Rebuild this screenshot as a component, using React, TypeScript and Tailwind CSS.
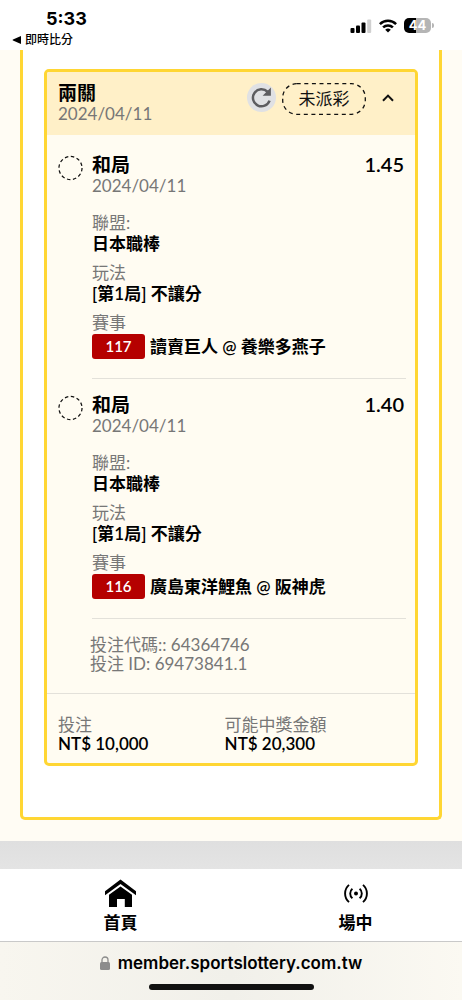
import { useState } from 'react';

type Leg = {
  pick: string;
  date: string;
  odds: string;
  league: string;
  market: string;
  code: string;
  match: string;
};

const LEGS: Leg[] = [
  { pick: '和局', date: '2024/04/11', odds: '1.45', league: '日本職棒', market: '[第1局] 不讓分', code: '117', match: '讀賣巨人 @ 養樂多燕子' },
  { pick: '和局', date: '2024/04/11', odds: '1.40', league: '日本職棒', market: '[第1局] 不讓分', code: '116', match: '廣島東洋鯉魚 @ 阪神虎' },
];

function StatusBar() {
  return (
    <header className="flex h-[50px] shrink-0 items-start justify-between bg-white pl-3 pr-7">
      <div className="flex flex-col pt-2 text-black">
        <span className="pl-[34px] font-['Inter','Noto_Sans_CJK_TC',sans-serif] text-[18px] font-bold leading-[22px]">5:33</span>
        <a href="#back" className="flex items-center gap-1 text-[12px] font-medium leading-5">
          <svg className="h-2 w-[9px]" viewBox="0 0 9 8" fill="currentColor" aria-hidden="true">
            <path d="M9 0v8L1 4.6a.7.7 0 0 1 0-1.2z" />
          </svg>
          即時比分
        </a>
      </div>
      <div className="flex items-center gap-[7px] pt-[18px]">
        <svg className="h-[14px] w-[22px]" viewBox="0 0 22 14" aria-hidden="true">
          <rect x="0.5" y="9" width="4" height="5" rx="1" />
          <rect x="6" y="6.5" width="4" height="7.5" rx="1" />
          <rect x="11.5" y="3.5" width="4" height="10.5" rx="1" />
          <rect x="17.2" y="0.5" width="4" height="13.5" rx="1" fill="#d0d0d0" />
        </svg>
        <svg className="h-[14px] w-[18px]" viewBox="0 0 18 14" fill="none" stroke="#000" strokeWidth="2.5" aria-hidden="true">
          <path d="M.9 5.1a11.6 11.6 0 0 1 16.2 0M4.1 8.4a7 7 0 0 1 9.8 0" />
          <path d="M9 13.6 6.2 10.8a4 4 0 0 1 5.6 0z" fill="#000" stroke="none" />
        </svg>
        <div className="flex items-center gap-px">
          <span className="flex h-[15px] w-[27px] items-center justify-center rounded-[5px] bg-linear-to-r from-black from-44% to-[#b5b5b5] to-44% font-['Inter',sans-serif] text-[13px] font-bold leading-none text-white">
            44
          </span>
          <span className="h-[5px] w-[2px] rounded-r-full bg-[#b5b5b5]" />
        </div>
      </div>
    </header>
  );
}

function Field({ label, value }: { label: string; value: string }) {
  return (
    <div className="leading-[21px]">
      <dt className="text-[#777]">{label}</dt>
      <dd className="font-semibold text-black">{value}</dd>
    </div>
  );
}

function LegRow({ leg }: { leg: Leg }) {
  return (
    <li className="flex gap-[9px] pl-[11px] pr-[9px]">
      <svg className="mt-4 h-[26px] w-[25px] shrink-0" viewBox="0 0 26 26" fill="none" aria-hidden="true">
        <circle cx="13" cy="13" r="12" stroke="#111" strokeWidth="1.3" strokeDasharray="3.6 2.68" />
      </svg>
      <div className="min-w-0 flex-1 border-b border-[#e3e1da] pb-[19px] pt-[15px]">
        <div className="flex justify-between pr-[2px] leading-[21px] text-black">
          <h3 className="text-[19px] font-semibold">{leg.pick}</h3>
          <span className="text-[20px] font-semibold">{leg.odds}</span>
        </div>
        <p className="leading-[21px] text-[#777]">{leg.date}</p>
        <dl className="mt-4 flex flex-col gap-2">
          <Field label="聯盟:" value={leg.league} />
          <Field label="玩法" value={leg.market} />
          <div>
            <dt className="leading-[21px] text-[#777]">賽事</dt>
            <dd className="mt-px flex items-center gap-[5px] font-semibold text-black">
              <span className="w-[53px] rounded-[3px] bg-[#b50000] text-center text-[15px] leading-[25px] text-white">{leg.code}</span>
              <span className="leading-[25px]">{leg.match}</span>
            </dd>
          </div>
        </dl>
      </div>
    </li>
  );
}

function BetCard() {
  const [open, setOpen] = useState(true);

  return (
    <article className="overflow-hidden rounded-[5px] border-[3px] border-[#ffd633] bg-[#fffcf2]">
      <div className="flex items-start bg-[#fff0c8] pb-[11px] pl-[11px] pr-5 pt-[10px]">
        <div className="flex-1 leading-[21px]">
          <h2 className="text-[19px] font-semibold text-black">兩關</h2>
          <p className="text-[#777]">2024/04/11</p>
        </div>
        <button type="button" aria-label="重新整理" className="mt-px flex size-[29px] items-center justify-center rounded-full bg-[#e0e1e4]">
          <svg className="size-[23px]" viewBox="0 0 24 24" fill="none" aria-hidden="true">
            <path d="M20.4 15.2A8.9 8.9 0 1 1 18.3 6" stroke="#5d5d60" strokeWidth="2.6" />
            <path d="M21.8 1.6v8.6h-8.6z" fill="#5d5d60" />
          </svg>
        </button>
        <div className="relative ml-[6px] mt-px h-8 w-[84px] text-center leading-8 text-[#111]">
          <svg className="absolute inset-0 size-full" viewBox="0 0 84 32" fill="none" aria-hidden="true">
            <rect x="0.7" y="0.7" width="82.6" height="30.6" rx="14" stroke="#111" strokeWidth="1.3" strokeDasharray="4 3.6" />
          </svg>
          未派彩
        </div>
        <button type="button" aria-label="收合" aria-expanded={open} onClick={() => setOpen(!open)} className="ml-[15px] mt-px flex h-[30px] w-[14px] items-center justify-center">
          <svg className="h-2 w-3" viewBox="0 0 12 8" fill="none" aria-hidden="true">
            <path d="m1 6.8 5-5.2 5 5.2" stroke="#111" strokeWidth="2" />
          </svg>
        </button>
      </div>
      {open && (
        <>
          <ul className="pt-1">
            {LEGS.map(leg => <LegRow key={leg.code} leg={leg} />)}
          </ul>
          <div className="pb-5 pl-[43px] pt-4 leading-[19px] text-[#777]">
            <p>投注代碼:: 64364746</p>
            <p>投注 ID: 69473841.1</p>
          </div>
        </>
      )}
      <dl className="grid grid-cols-[7fr_8fr] border-t border-[#e3e1da] pb-[10px] pl-[11px] pt-[21px] leading-[19px]">
        <div>
          <dt className="text-[#777]">投注</dt>
          <dd className="font-semibold text-black">NT$ 10,000</dd>
        </div>
        <div>
          <dt className="text-[#777]">可能中獎金額</dt>
          <dd className="font-semibold text-black">NT$ 20,300</dd>
        </div>
      </dl>
    </article>
  );
}

function TabBar() {
  return (
    <nav className="grid grid-cols-2 border-b border-[#c9c9c9] bg-white pb-[7px] pt-[10px] text-[17px] font-semibold leading-[22px] text-black">
      <a href="#home" className="flex flex-col items-center gap-1 pl-[10px]">
        <svg className="h-[29px] w-[31px]" viewBox="0 0 31 29" fill="currentColor" aria-hidden="true">
          <path d="M15.5.5 31 12.2v4L15.5 4.9 0 16.2v-4z" />
          <path d="M15.5 7.4 27 15.8V28h-7.2v-8h-7.8v8H4V15.8z" />
        </svg>
        首頁
      </a>
      <a href="#live" className="flex flex-col items-center gap-1 pl-[18px]">
        <svg className="h-[29px] w-[24px]" viewBox="0 0 24 29" fill="none" stroke="currentColor" strokeWidth="1.9" aria-hidden="true">
          <circle cx="12" cy="14.5" r="2" fill="currentColor" stroke="none" />
          <path d="M8.4 9.7a6.3 6.3 0 0 0 0 9.6M15.6 9.7a6.3 6.3 0 0 1 0 9.6M5 5.9a11.4 11.4 0 0 0 0 17.2M19 5.9a11.4 11.4 0 0 1 0 17.2" />
        </svg>
        場中
      </a>
    </nav>
  );
}

function BrowserBar() {
  return (
    <footer className="flex flex-1 flex-col items-center bg-linear-to-r from-[#f8f6ef] via-[#f1f0ea] to-[#fbf9f2] pb-[10px] pt-[9px]">
      <div className="flex items-center gap-2 font-['Inter',sans-serif] text-[17px] font-semibold leading-6 text-black">
        <svg className="h-[14px] w-[10px]" viewBox="0 0 10 14" fill="none" aria-hidden="true">
          <path d="M2 7V4a3 3 0 0 1 6 0v3" stroke="#8c8c8c" strokeWidth="1.3" />
          <rect y="6" width="10" height="8" rx="1.5" fill="#8c8c8c" />
        </svg>
        member.sportslottery.com.tw
      </div>
      <div className="mt-[9px] h-[6px] w-[165px] rounded-full bg-[#111]" />
    </footer>
  );
}

export default function App() {
  return (
    <div className="flex min-h-screen flex-col bg-white font-['Lato','Noto_Sans_CJK_TC',sans-serif] text-[17px]">
      <StatusBar />
      <main className="bg-[#fffcf4] px-5 pb-[21px]">
        <section className="rounded-b-[5px] border-x-[3px] border-b-[3px] border-[#ffd633] bg-white px-[21px] pb-[51px] pt-[19px]">
          <BetCard />
        </section>
      </main>
      <div className="h-7 bg-linear-to-b from-[#dfdfdf] to-[#e4e4e4]" />
      <TabBar />
      <BrowserBar />
    </div>
  );
}
